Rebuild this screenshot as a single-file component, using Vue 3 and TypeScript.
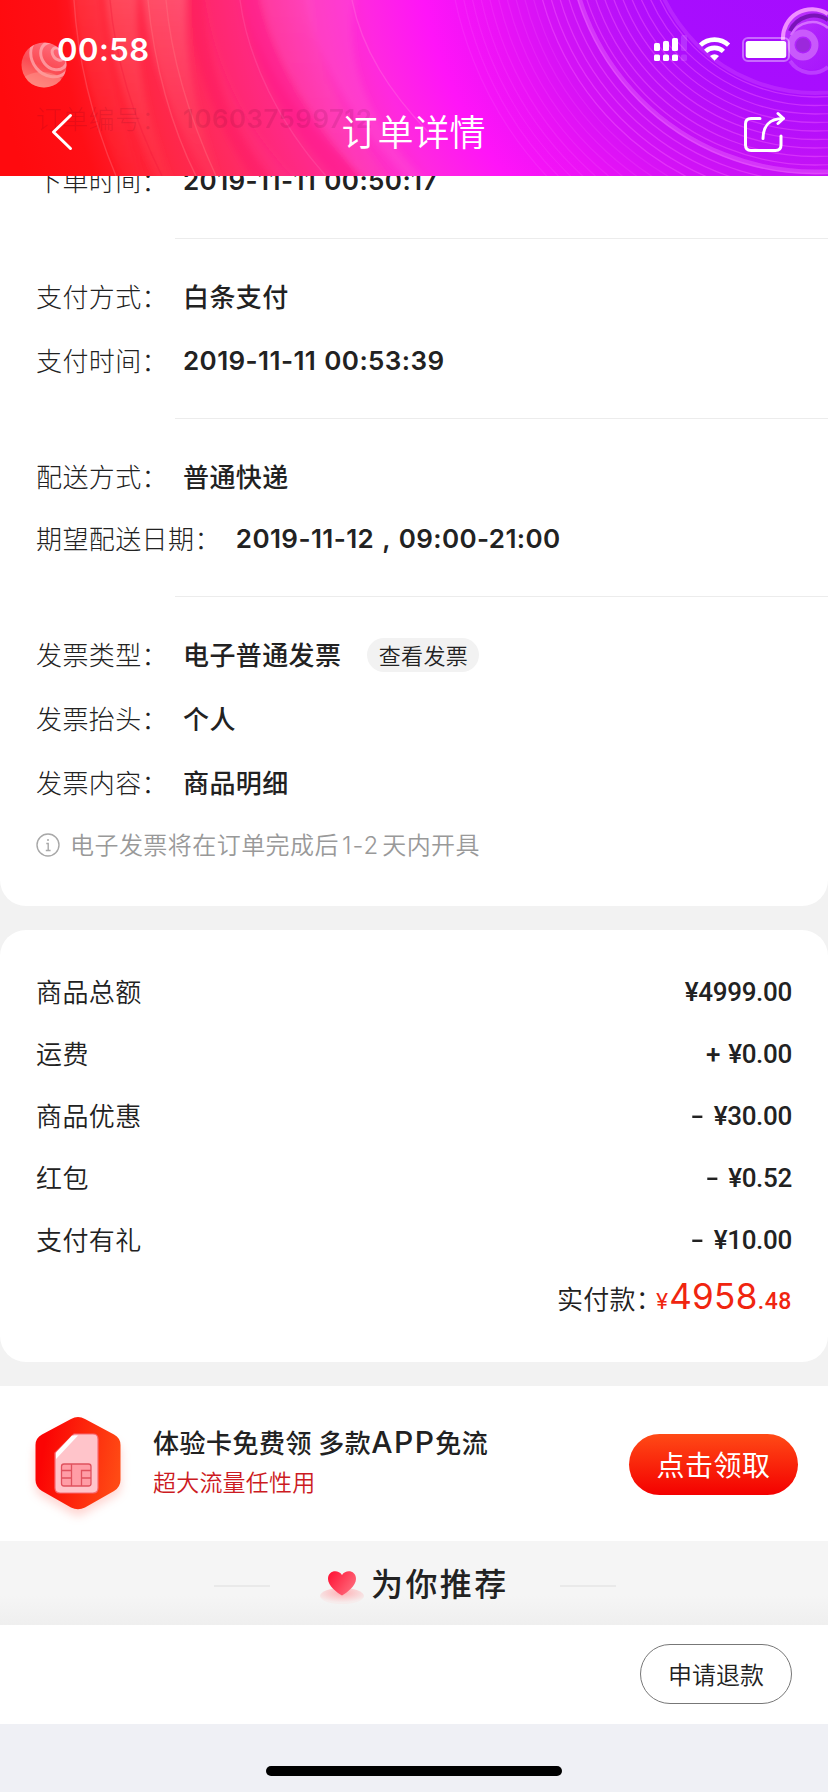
<script setup lang="ts">
interface InfoRow {
  label: string
  value: string
  action?: string
}

interface AmountRow {
  label: string
  sign?: string
  amount: string
}

const payment: InfoRow[] = [
  { label: '支付方式：', value: '白条支付' },
  { label: '支付时间：', value: '2019-11-11 00:53:39' },
]

const delivery: InfoRow[] = [
  { label: '配送方式：', value: '普通快递' },
  { label: '期望配送日期：', value: '2019-11-12 , 09:00-21:00' },
]

const invoice: InfoRow[] = [
  { label: '发票类型：', value: '电子普通发票', action: '查看发票' },
  { label: '发票抬头：', value: '个人' },
  { label: '发票内容：', value: '商品明细' },
]

const amounts: AmountRow[] = [
  { label: '商品总额', amount: '¥4999.00' },
  { label: '运费', sign: '+', amount: '¥0.00' },
  { label: '商品优惠', sign: '-', amount: '¥30.00' },
  { label: '红包', sign: '-', amount: '¥0.52' },
  { label: '支付有礼', sign: '-', amount: '¥10.00' },
]

const rings: number[] = Array.from({ length: 24 }, (_, i) => 172 + i * 8.5)
const isNumeric = (value: string): boolean => /^\d/.test(value)
</script>

<template>
  <div class="page">
    <header class="header">
      <svg class="header-art" viewBox="0 0 828 176" width="828" height="176" aria-hidden="true">
        <defs>
          <radialGradient id="sky" gradientUnits="userSpaceOnUse" cx="815" cy="-75" r="830">
            <stop offset="0" stop-color="#a40cff" />
            <stop offset="0.2" stop-color="#a80dfe" />
            <stop offset="0.3" stop-color="#c612f6" />
            <stop offset="0.4" stop-color="#ea12f6" />
            <stop offset="0.48" stop-color="#ff14f8" />
            <stop offset="0.55" stop-color="#ff28e0" />
            <stop offset="0.62" stop-color="#ff34b8" />
            <stop offset="0.68" stop-color="#ff2c90" />
            <stop offset="0.76" stop-color="#ff2a60" />
            <stop offset="0.84" stop-color="#ff2640" />
            <stop offset="0.92" stop-color="#ff0f16" />
            <stop offset="1" stop-color="#ff0a0e" />
          </radialGradient>
          <linearGradient id="streak" x1="0" y1="0" x2="0" y2="1">
            <stop offset="0" stop-color="#ff8a90" stop-opacity="0.4" />
            <stop offset="1" stop-color="#ff5a60" stop-opacity="0.12" />
          </linearGradient>
          <linearGradient id="streakPink" x1="0" y1="0" x2="0" y2="1">
            <stop offset="0" stop-color="#ff80c8" stop-opacity="0.35" />
            <stop offset="1" stop-color="#ff58b0" stop-opacity="0.25" />
          </linearGradient>
          <linearGradient id="ball" x1="0.7" y1="0" x2="0.3" y2="1">
            <stop offset="0" stop-color="#ff6f80" />
            <stop offset="0.5" stop-color="#fb4a52" />
            <stop offset="1" stop-color="#ff8478" />
          </linearGradient>
          <linearGradient id="orb" x1="0" y1="0" x2="1" y2="1">
            <stop offset="0" stop-color="#e878ff" />
            <stop offset="0.5" stop-color="#b83cf8" />
            <stop offset="1" stop-color="#a61cfb" />
          </linearGradient>
          <clipPath id="ballClip"><circle cx="44" cy="65" r="22.500" /></clipPath>
          <filter id="soft" x="-10%" y="-10%" width="120%" height="120%">
            <feGaussianBlur stdDeviation="3" />
          </filter>
        </defs>
        <rect width="828" height="176" fill="url(#sky)" />
        <g filter="url(#soft)">
          <path d="M72 -8C78 60 100 130 126 184L146 184C124 125 106 60 100 -8Z" fill="url(#streak)" opacity="0.5" />
          <path d="M104 -8C110 70 134 130 158 184L174 184C146 120 134 60 138 -8Z" fill="url(#streak)" opacity="0.9" />
          <path d="M142 -8C150 70 180 135 212 184L222 184C200 125 184 70 186 -8Z" fill="url(#streak)" />
          <path d="M186 -8C190 70 222 135 256 184L276 184C226 125 206 60 204 -8Z" fill="#fb1450" opacity="0.22" />
          <path d="M204 -8C214 70 250 135 300 184L370 184C296 120 258 60 240 -8Z" fill="#ff2070" opacity="0.28" />
          <path d="M240 -8C252 70 290 130 340 184L368 184C316 125 272 60 258 -8Z" fill="#ff1488" opacity="0.4" />
          <path d="M260 -8C276 70 318 125 366 184L392 184C346 125 312 60 310 -8Z" fill="url(#streakPink)" opacity="0.5" />
          <path d="M306 -8C310 50 350 120 412 184L430 184C372 130 340 60 356 -8Z" fill="#ff60d8" opacity="0.28" />
        </g>
        <g fill="none" stroke="#ff7c88" stroke-opacity="0.35" stroke-width="1.4">
          <path d="M74 0C78 66 96 128 116 176" />
          <path d="M110 0C116 66 138 128 162 176" stroke="#f01838" />
          <path d="M148 0C154 66 172 128 196 176" />
          <path d="M166 0C172 66 194 128 216 176" />
          <path d="M240 0C248 60 280 125 326 176" stroke="#ff78b8" stroke-opacity="0.25" />
          <path d="M352 0C362 50 390 92 428 132" stroke="#ff78e0" />
        </g>
        <g fill="none" stroke="#ff70ff" stroke-width="1.3">
          <circle v-for="r in rings" :key="r" cx="815" cy="-75" :r="r" :opacity="r > 290 ? 0.16 : 0.34" />
        </g>
        <circle cx="815" cy="-75" r="168" fill="none" stroke="#d44cff" stroke-width="4" opacity="0.35" />
        <circle cx="815" cy="-75" r="247" fill="none" stroke="#f070ff" stroke-width="5" opacity="0.38" />
        <g clip-path="url(#ballClip)">
          <rect x="20" y="42" width="48" height="48" fill="url(#ball)" />
          <g fill="none" stroke="#ffb8be" stroke-width="3" opacity="0.65">
            <ellipse cx="58" cy="54" rx="5" ry="7" transform="rotate(-40 58 54)" />
            <ellipse cx="54" cy="56" rx="12" ry="15" transform="rotate(-40 54 56)" />
            <ellipse cx="51" cy="56" rx="19" ry="22" transform="rotate(-40 51 56)" />
          </g>
          <ellipse cx="42" cy="82" rx="20" ry="10" fill="#ff9a90" opacity="0.45" />
        </g>
        <circle cx="812" cy="40" r="30" fill="url(#orb)" opacity="0.4" />
        <path d="M783 40A29 29 0 0 1 828 14" fill="none" stroke="#ef90ff" stroke-width="4" />
        <path d="M790 31A26 26 0 0 1 828 20" fill="none" stroke="#7a14b8" stroke-width="4" />
        <path d="M791 35A24 24 0 0 1 828 28" fill="none" stroke="#dd80ff" stroke-width="2.500" opacity="0.8" />
        <circle cx="803" cy="45" r="12" fill="none" stroke="#cf68fb" stroke-width="7" opacity="0.8" />
        <circle cx="803" cy="45" r="7" fill="#9c28dc" />
        <path d="M828 67A26 26 0 0 1 790 61" fill="none" stroke="#c95cff" stroke-width="4" opacity="0.6" />
      </svg>

      <div class="ghost-row">
        <span class="label">订单编号：</span>
        <span class="value numeric">106037599712</span>
      </div>

      <div class="status-bar">
        <span class="clock">00:58</span>
        <svg class="status-icons" viewBox="0 0 140 30" width="140" height="30" aria-hidden="true">
          <g fill="#fff">
            <rect x="3" y="8" width="6" height="8" rx="1.6" />
            <rect x="12" y="6" width="6" height="10" rx="1.600" />
            <rect x="21" y="3" width="6" height="13" rx="1.6" />
            <rect x="30" y="0" width="6" height="16" rx="1.6" opacity="0.14" />
            <rect x="3" y="19.500" width="6" height="6.500" rx="1.600" />
            <rect x="12" y="19.500" width="6" height="6.500" rx="1.600" />
            <rect x="21" y="19.500" width="6" height="6.500" rx="1.600" />
            <rect x="30" y="19.500" width="6" height="6.500" rx="1.600" opacity="0.14" />
          </g>
          <g fill="none" stroke="#fff" stroke-width="4.6">
            <path d="M49.400 10.200A20.500 20.500 0 0 1 77.600 10.200" />
            <path d="M54.600 16.400A12.900 12.900 0 0 1 72.400 16.400" />
          </g>
          <path d="M59 21Q63.500 17.400 68 21L63.500 25.800Z" fill="#fff" />
          <rect x="92" y="3" width="46" height="23" rx="5" fill="none" stroke="#fff" stroke-opacity="0.38" stroke-width="2" />
          <rect x="94.700" y="6" width="40.500" height="17" rx="2.500" fill="#fff" />
        </svg>
      </div>

      <div class="nav">
        <svg class="back" viewBox="0 0 22 38" width="22" height="38" fill="none" stroke="#fff" stroke-width="3" stroke-linecap="round" stroke-linejoin="round" aria-hidden="true">
          <path d="M19.500 2.500L2.500 19L19.500 35.500" />
        </svg>
        <h1 class="title">订单详情</h1>
        <svg class="share" viewBox="0 0 42 42" width="42" height="42" fill="none" stroke="#fff" stroke-width="3" stroke-linecap="round" stroke-linejoin="round" aria-hidden="true">
          <path d="M17 7.500H8Q2.500 7.500 2.500 13V34Q2.500 39.500 8 39.500H32.500Q38 39.500 38 34V25" />
          <path d="M20 27.500C20 16 26 7.500 40 7.500" />
          <path d="M35 2.500L40.500 7.500L35 12.500" />
        </svg>
      </div>
    </header>

    <main>
      <section class="card info-card">
        <div class="group first">
          <div class="row">
            <span class="label">下单时间：</span>
            <span class="value numeric">2019-11-11 00:50:17</span>
          </div>
        </div>
        <div class="group pay">
          <div v-for="row in payment" :key="row.label" class="row">
            <span class="label">{{ row.label }}</span>
            <span class="value" :class="{ numeric: isNumeric(row.value) }">{{ row.value }}</span>
          </div>
        </div>
        <div class="group ship">
          <div v-for="row in delivery" :key="row.label" class="row">
            <span class="label">{{ row.label }}</span>
            <span class="value" :class="{ numeric: isNumeric(row.value) }">{{ row.value }}</span>
          </div>
        </div>
        <div class="group bill">
          <div v-for="row in invoice" :key="row.label" class="row">
            <span class="label">{{ row.label }}</span>
            <span class="value">{{ row.value }}</span>
            <button v-if="row.action" class="tag" type="button">{{ row.action }}</button>
          </div>
          <p class="hint">
            <svg viewBox="0 0 24 24" width="24" height="24" fill="none" stroke="#a8a8a8" stroke-width="1.4" aria-hidden="true">
              <circle cx="12" cy="12" r="11" />
              <circle cx="12" cy="7" r="1" fill="#a8a8a8" stroke="none" />
              <path d="M10.300 10.500H12.200V17.500M9.800 17.500H14.600" />
            </svg>
            <span>电子发票将在订单完成后<span class="days">1-2</span>天内开具</span>
          </p>
        </div>
      </section>

      <section class="card amount-card">
        <div v-for="row in amounts" :key="row.label" class="amount-row">
          <span class="amount-label">{{ row.label }}</span>
          <span class="amount"><span v-if="row.sign" class="sign" :class="{ minus: row.sign === '-' }">{{ row.sign }}</span>{{ row.amount }}</span>
        </div>
        <div class="total">
          <span class="total-label">实付款：</span>
          <span class="yen">¥</span><span class="whole">4958</span><span class="cents">.48</span>
        </div>
      </section>

      <section class="banner">
        <svg class="sim" viewBox="0 0 110 120" width="110" height="120" aria-hidden="true">
          <defs>
            <linearGradient id="hex" x1="0" y1="0.3" x2="1" y2="0.5">
              <stop offset="0.1" stop-color="#fb0404" />
              <stop offset="1" stop-color="#ff4a14" />
            </linearGradient>
            <filter id="glow" x="-30%" y="-30%" width="160%" height="160%">
              <feGaussianBlur stdDeviation="5" />
            </filter>
          </defs>
          <path d="M49 12Q55 8 61 12L92 29Q98 33 98 39V72Q98 78 92 82L61 100Q55 104 49 100L18 82Q12 78 12 72V39Q12 33 18 29Z" fill="#ff8a80" opacity="0.35" transform="translate(0 6)" filter="url(#glow)" />
          <path d="M48 11Q55 7 62 11L91 26.500Q97.500 30 97.500 37V72Q97.500 79 91 83L62 99.500Q55 103 48 99.500L19 83Q12.500 79 12.500 72V37Q12.500 30 19 26.500Z" fill="url(#hex)" />
          <path d="M51 26H70Q75 26 75 31V80Q75 85 70 85H37Q32 85 32 80V45Z" fill="#ffc4ca" stroke="#f86a72" stroke-width="1.2" />
          <path d="M49 27.500L55 27.500L33 51V44.500Z" fill="#fff" />
          <g fill="#ff9da6" stroke="#e0525e" stroke-width="1.3">
            <rect x="38.500" y="56" width="29.500" height="22" rx="2.500" />
            <path d="M38.500 62.500H48.500M38.500 70H48.500M48.500 56V78M58.500 78V62.500H68M58.500 70H68" fill="none" />
          </g>
        </svg>
        <div class="banner-copy">
          <div class="banner-title">体验卡免费领 多款<span class="latin">APP</span>免流</div>
          <div class="banner-sub">超大流量任性用</div>
        </div>
        <button class="claim" type="button">点击领取</button>
      </section>

      <section class="recommend">
        <span class="rule"></span>
        <svg class="heart" viewBox="0 0 50 44" width="50" height="44" aria-hidden="true">
          <defs>
            <linearGradient id="love" x1="0" y1="0.2" x2="1" y2="0.8">
              <stop offset="0" stop-color="#ff1638" />
              <stop offset="1" stop-color="#ff7080" />
            </linearGradient>
            <radialGradient id="plate" cx="0.5" cy="0.3" r="0.6">
              <stop offset="0" stop-color="#ffb0b4" />
              <stop offset="1" stop-color="#f6ecec" />
            </radialGradient>
          </defs>
          <ellipse cx="25" cy="34" rx="22" ry="8" fill="url(#plate)" />
          <path d="M25 33.500C20 30.500 11 24 11 17C11 8.500 21 7 25 13C29 7 39 8.500 39 17C39 24 30 30.500 25 33.500Z" fill="url(#love)" />
        </svg>
        <h2 class="recommend-title">为你推荐</h2>
        <span class="rule"></span>
      </section>
    </main>

    <footer class="actions">
      <button class="refund" type="button">申请退款</button>
    </footer>
    <div class="home-area"><span class="home-bar"></span></div>
  </div>
</template>

<style>
body {
  margin: 0;
}
</style>

<style scoped>
.page {
  width: 828px;
  height: 1792px;
  display: flex;
  flex-direction: column;
  overflow: hidden;
  background: #f2f2f2;
  color: #222;
  font-family: "Noto Sans CJK SC", sans-serif;
}

button {
  font: inherit;
  padding: 0;
  border: 0;
}

h1,
h2,
p {
  margin: 0;
}

.header {
  position: relative;
  flex: none;
  z-index: 1;
  height: 176px;
  overflow: hidden;
  color: #fff;
}

.header-art {
  position: absolute;
  inset: 0;
}

.ghost-row {
  position: absolute;
  left: 36px;
  top: 99px;
  height: 40px;
  display: flex;
  align-items: center;
  color: #400020;
  opacity: 0.1;
}

.status-bar {
  position: relative;
  height: 100px;
  display: flex;
  justify-content: space-between;
  padding: 0 37px 0 57px;
}

.clock {
  font: 600 31px/100px Inter, sans-serif;
  letter-spacing: 0.5px;
}

.status-icons {
  margin-top: 35px;
}

.nav {
  position: relative;
  height: 64px;
  display: flex;
  align-items: center;
  justify-content: space-between;
  padding: 0 43px 0 51px;
}

.title {
  font-size: 36px;
  font-weight: 350;
  line-height: 60px;
  margin: 0 0 4px 11px;
}

.card {
  background: #fff;
}

.info-card {
  height: 730px;
  border-radius: 0 0 26px 26px;
}

.group {
  box-sizing: border-box;
  padding-left: 36px;
  display: flex;
  flex-direction: column;
}

.group::after {
  content: "";
  height: 1px;
  margin-top: auto;
  margin-left: 139px;
  background: #ececec;
}

.first {
  height: 63px;
}

.first .row {
  margin-top: -15px;
}

.pay {
  height: 180px;
  padding-top: 38px;
  gap: 24px;
}

.ship {
  height: 178px;
  padding-top: 38px;
  gap: 22px;
}

.bill {
  padding-top: 38px;
  gap: 24px;
}

.bill::after {
  display: none;
}

.row {
  height: 40px;
  display: flex;
  align-items: center;
}

.label {
  font-size: 26px;
  font-weight: 300;
  letter-spacing: 0.4px;
  line-height: 38px;
  margin: 0 15px 2px 0;
}

.value {
  font-size: 26px;
  font-weight: 500;
  letter-spacing: 0.4px;
  line-height: 38px;
  margin-bottom: 2px;
}

.value.numeric {
  font-family: Inter, sans-serif;
  font-weight: 600;
  font-size: 26px;
  line-height: 40px;
  letter-spacing: 0.4px;
  word-spacing: 1.2px;
  margin-bottom: 0;
}

.tag {
  width: 112px;
  height: 34px;
  margin-left: 26px;
  border-radius: 17px;
  background: #f2f2f2;
  color: #222;
  font-size: 22px;
  letter-spacing: 0.3px;
  line-height: 32px;
  padding-bottom: 2px;
  font-weight: 350;
}

.hint {
  height: 36px;
  display: flex;
  align-items: center;
  gap: 10px;
  font-size: 24px;
  font-weight: 350;
  letter-spacing: 0.45px;
  line-height: 36px;
  color: #999;
}

.days {
  font-family: Inter, sans-serif;
  letter-spacing: 1px;
  margin: 0 3px;
}

.amount-card {
  box-sizing: border-box;
  height: 432px;
  margin-top: 24px;
  padding: 31px 36px 0;
  border-radius: 26px;
}

.amount-row {
  height: 62px;
  display: flex;
  justify-content: space-between;
  align-items: center;
}

.amount-label {
  font-size: 26px;
  font-weight: 350;
  letter-spacing: 0.4px;
  margin-bottom: 4px;
}

.amount {
  font-family: Roboto, sans-serif;
  font-weight: 500;
  font-size: 26px;
  letter-spacing: -0.3px;
}

.sign {
  display: inline-block;
  margin-right: 8px;
}

.minus {
  transform: scaleX(1.5);
  margin-right: 12px;
}

.total {
  display: flex;
  justify-content: flex-end;
  align-items: baseline;
  line-height: 54px;
}

.total-label {
  font-size: 26px;
  font-weight: 350;
  letter-spacing: 0.3px;
  font-feature-settings: "halt";
  margin-right: 7px;
}

.yen,
.whole,
.cents {
  color: #f0250f;
}

.yen {
  font: 400 22px Inter, sans-serif;
  margin-right: 1px;
}

.whole {
  font: 400 35px Inter, sans-serif;
  letter-spacing: 0.3px;
}

.cents {
  font: 500 23px Roboto, sans-serif;
  letter-spacing: 0.6px;
}

.banner {
  height: 155px;
  margin-top: 24px;
  display: flex;
  align-items: flex-start;
  background: #fff;
}

.sim {
  margin: 22px 0 0 23px;
}

.banner-copy {
  flex: 1;
  margin: 36px 0 0 20px;
}

.banner-title {
  font-size: 26px;
  font-weight: 500;
  line-height: 40px;
  letter-spacing: 0.5px;
  white-space: nowrap;
}

.latin {
  font: 500 30px/30px Inter, sans-serif;
  letter-spacing: 1.4px;
}

.banner-sub {
  font-size: 23px;
  font-weight: 350;
  line-height: 38px;
  letter-spacing: 0.2px;
  color: #cc1a22;
}

.claim {
  width: 169px;
  height: 61px;
  margin: 48px 30px 0 0;
  border-radius: 31px;
  background: linear-gradient(#ff4a16, #f40000);
  color: #fff;
  font-size: 28px;
  letter-spacing: 0.5px;
  line-height: 59px;
}

.recommend {
  height: 84px;
  display: flex;
  align-items: center;
  background: linear-gradient(#f5f5f5 65%, #efefef);
}

.rule {
  width: 56px;
  height: 2px;
  margin: 6px 0 0 214px;
  background: #e9e9e9;
}

.recommend-title + .rule {
  margin-left: 51px;
}

.heart {
  margin: 2px 0 0 47px;
}

.recommend-title {
  margin: 0 0 2px 4px;
  font-size: 32px;
  font-weight: 500;
  letter-spacing: 2.4px;
  line-height: 48px;
}

.actions {
  flex: none;
  height: 99px;
  display: flex;
  align-items: center;
  justify-content: flex-end;
  padding-right: 36px;
  background: #fff;
}

.refund {
  box-sizing: border-box;
  width: 152px;
  height: 60px;
  margin-bottom: 2px;
  border: 1px solid #777;
  border-radius: 30px;
  background: #fff;
  color: #222;
  font-size: 24px;
  font-weight: 350;
  line-height: 56px;
}

.home-area {
  flex: 1;
  display: flex;
  justify-content: center;
  align-items: flex-end;
  background: #eff0f5;
}

.home-bar {
  width: 296px;
  height: 10px;
  margin-bottom: 16px;
  border-radius: 5px;
  background: #000;
}
</style>
